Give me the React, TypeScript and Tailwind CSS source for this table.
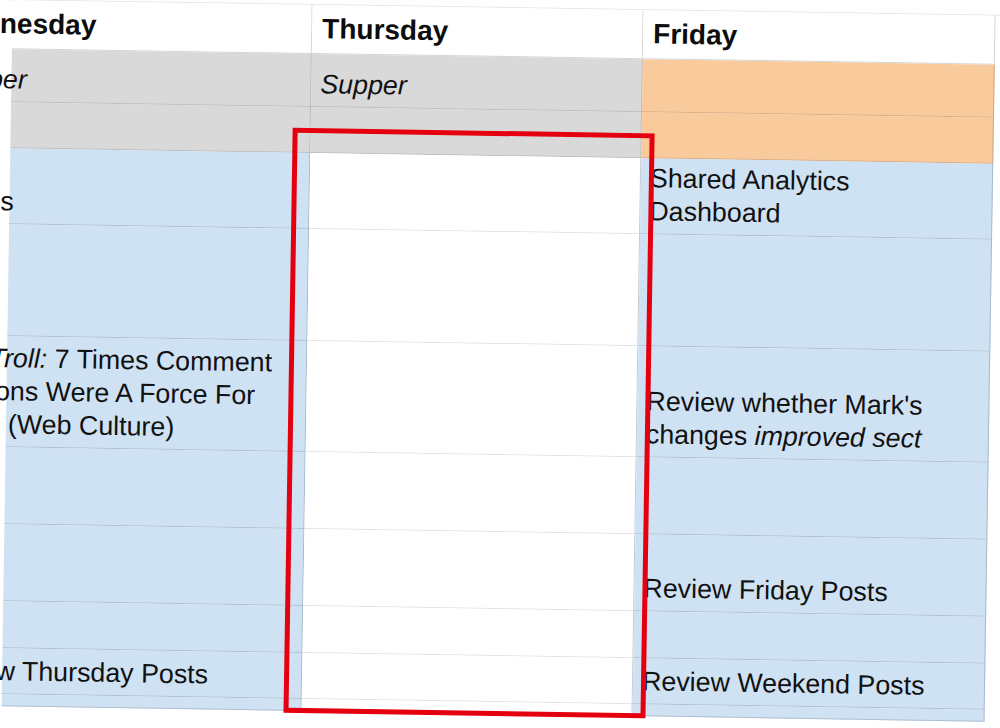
import React from "react";

type Kind = "head" | "gray" | "orange" | "blue" | "white";

const bg: Record<Kind, string> = {
  head: "bg-white",
  gray: "bg-[#d9d9d9]",
  orange: "bg-[#f9cb9c]",
  blue: "bg-[#cfe2f3]",
  white: "bg-white",
};

const bottomLine: Record<Kind, string> = {
  head: "border-b-[#cfd5db]",
  gray: "border-b-[#bfbfbf]",
  orange: "border-b-[#dcae88]",
  blue: "border-b-[#b2c1d0]",
  white: "border-b-[#e2e2e2]",
};

const rightLine: Record<Kind, string> = {
  head: "border-r-[#d6d6d6]",
  gray: "border-r-[#bdbdbd]",
  orange: "border-r-[#c9a98c]",
  blue: "border-r-[#aab9c8]",
  white: "border-r-[#c4ccd3]",
};

type CellDef = { kind: Kind; content?: React.ReactNode };
type RowDef = { h: string; cells: [CellDef, CellDef, CellDef] };

const widths = ["w-[300px]", "w-[331px]", "w-[352px]"];

function Body({ children, shift = "" }: { children: React.ReactNode; shift?: string }) {
  return (
    <div className="flex h-full flex-col justify-end pb-[5px] pl-[9px] text-[26.8px] leading-[33px] whitespace-nowrap text-[#111111]">
      <div className={shift}>{children}</div>
    </div>
  );
}

function Head({ children, shift = "" }: { children: React.ReactNode; shift?: string }) {
  return (
    <div className="flex h-full flex-col justify-end pb-[8px] pl-[10px] text-[28px] font-bold leading-[33px] whitespace-nowrap text-[#0d0d0d]">
      <div className={shift}>{children}</div>
    </div>
  );
}

const rows: RowDef[] = [
  {
    h: "h-[49px]",
    cells: [
      { kind: "head", content: <Head shift="ml-[-81px]">Wednesday</Head> },
      { kind: "head", content: <Head>Thursday</Head> },
      { kind: "head", content: <Head>Friday</Head> },
    ],
  },
  {
    h: "h-[53px]",
    cells: [
      { kind: "gray", content: <Body shift="ml-[-80px]"><i>Supper</i></Body> },
      { kind: "gray", content: <Body><i>Supper</i></Body> },
      { kind: "orange" },
    ],
  },
  {
    h: "h-[46px]",
    cells: [{ kind: "gray" }, { kind: "gray" }, { kind: "orange" }],
  },
  {
    h: "h-[76px]",
    cells: [
      { kind: "blue", content: <Body shift="ml-[-85px]">Emails</Body> },
      { kind: "white" },
      {
        kind: "blue",
        content: (
          <Body>
            <div>Shared Analytics</div>
            <div>Dashboard</div>
          </Body>
        ),
      },
    ],
  },
  {
    h: "h-[112px]",
    cells: [{ kind: "blue" }, { kind: "white" }, { kind: "blue" }],
  },
  {
    h: "h-[111px]",
    cells: [
      {
        kind: "blue",
        content: (
          <Body shift="ml-[-80px]">
            <div>
              <i>The Troll:</i> 7 Times Comment
            </div>
            <div>Sections Were A Force For</div>
            <div>Good (Web Culture)</div>
          </Body>
        ),
      },
      { kind: "white" },
      {
        kind: "blue",
        content: (
          <Body>
            <div>Review whether Mark's</div>
            <div>
              changes <i>improved sect</i>
            </div>
          </Body>
        ),
      },
    ],
  },
  {
    h: "h-[77px]",
    cells: [{ kind: "blue" }, { kind: "white" }, { kind: "blue" }],
  },
  {
    h: "h-[77px]",
    cells: [
      { kind: "blue" },
      { kind: "white" },
      { kind: "blue", content: <Body>Review Friday Posts</Body> },
    ],
  },
  {
    h: "h-[47px]",
    cells: [{ kind: "blue" }, { kind: "white" }, { kind: "blue" }],
  },
  {
    h: "h-[46px]",
    cells: [
      { kind: "blue", content: <Body shift="ml-[-84px]">Review Thursday Posts</Body> },
      { kind: "white" },
      { kind: "blue", content: <Body>Review Weekend Posts</Body> },
    ],
  },
  {
    h: "h-[12px]",
    cells: [{ kind: "blue" }, { kind: "white" }, { kind: "blue" }],
  },
];

export default function App() {
  return (
    <div className="relative h-[728px] w-[1000px] overflow-hidden bg-white font-['Liberation_Sans',Arial,sans-serif]">
      <div className="relative h-[728px] w-[1000px] origin-center rotate-[0.9deg]">
        <div className="pt-[7px]">
          <div className="border-t border-t-[#e6e6e6]">
            {rows.map((row, ri) => (
              <div key={ri} className={"flex " + row.h}>
                <div className="w-[7px] shrink-0" />
                {row.cells.map((c, ci) => (
                  <div
                    key={ci}
                    className={
                      "shrink-0 border-r border-b " +
                      widths[ci] +
                      " " +
                      bg[c.kind] +
                      " " +
                      bottomLine[c.kind] +
                      " " +
                      rightLine[c.kind]
                    }
                  >
                    {c.content}
                  </div>
                ))}
              </div>
            ))}
          </div>
        </div>
        <div className="absolute left-[289px] top-[131px] h-[585px] w-[362px] border-[5px] border-[#e4000f]" />
      </div>
    </div>
  );
}
